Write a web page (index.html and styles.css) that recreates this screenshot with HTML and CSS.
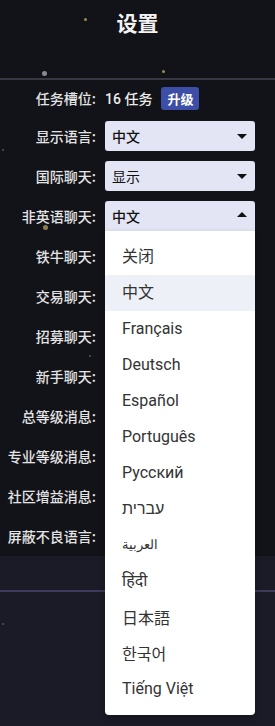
FILE: index.html
```html
<!DOCTYPE html>
<html lang="zh">
  <head>
    <meta charset="UTF-8" />
    <meta name="viewport" content="width=device-width, initial-scale=1.0" />
    <title>设置</title>
    <link rel="stylesheet" href="styles.css">
  </head>
  <body>
    <div class="page">
      <!-- decorative stars -->
      <span class="star gold" style="left: 84px; top: 18px"></span>
      <span class="star grey big" style="left: 42px; top: 71px"></span>
      <span class="star gold" style="left: 162px; top: 70px"></span>
      <span class="star gold spark" style="left: 43px; top: 225px"></span>
      <span class="star dim" style="left: 2px; top: 149px"></span>
      <span class="star dim" style="left: 89px; top: 355px"></span>
      <span class="star dim" style="left: 2px; top: 623px"></span>

      <div class="header">
        <h1>设置</h1>
      </div>

      <div class="settings">
        <div class="row first">
          <div class="label">任务槽位:</div>
          <div class="value">
            <span class="slots">16 任务</span>
            <span class="badge">升级</span>
          </div>
        </div>
        <div class="row">
          <div class="label">显示语言:</div>
          <div class="value">
            <div class="select bold">中文<span class="arrow"></span></div>
          </div>
        </div>
        <div class="row">
          <div class="label">国际聊天:</div>
          <div class="value">
            <div class="select">显示<span class="arrow"></span></div>
          </div>
        </div>
        <div class="row">
          <div class="label">非英语聊天:</div>
          <div class="value">
            <div class="select bold open">中文<span class="arrow up"></span></div>
            <ul class="dropdown">
              <li>关闭</li>
              <li class="active">中文</li>
              <li>Français</li>
              <li>Deutsch</li>
              <li>Español</li>
              <li>Português</li>
              <li>Русский</li>
              <li>עברית</li>
              <li class="arabic">العربية</li>
              <li>हिंदी</li>
              <li lang="ja" class="ja">日本語</li>
              <li lang="ko" class="ko">한국어</li>
              <li>Tiếng Việt</li>
            </ul>
          </div>
        </div>
        <div class="row"><div class="label">铁牛聊天:</div></div>
        <div class="row"><div class="label">交易聊天:</div></div>
        <div class="row"><div class="label">招募聊天:</div></div>
        <div class="row"><div class="label">新手聊天:</div></div>
        <div class="row"><div class="label">总等级消息:</div></div>
        <div class="row"><div class="label">专业等级消息:</div></div>
        <div class="row"><div class="label">社区增益消息:</div></div>
        <div class="row"><div class="label">屏蔽不良语言:</div></div>
      </div>

      <div class="spacer"></div>
      <div class="footer"></div>
    </div>
  </body>
</html>
```

FILE: styles.css
```css
body {
  margin: 0;
  background-color: #1b1b27;
  font-family: "Noto Sans CJK SC", "Noto Sans", sans-serif;
  color: #e6e6e6;
}
.page {
  position: relative;
  min-height: 726px;
  overflow: hidden;
}
.star {
  position: absolute;
  width: 3px;
  height: 3px;
  border-radius: 50%;
}
.star.gold {
  background-color: #9c8a52;
}
.star.grey {
  background-color: #8a8a92;
}
.star.big {
  width: 5px;
  height: 5px;
}
.star.spark {
  width: 5px;
  height: 5px;
  background-color: #8e7d4c;
}
.star.dim {
  width: 2px;
  height: 2px;
  background-color: #55555e;
}
.header {
  height: 80px;
  box-sizing: border-box;
  background-color: #121318;
  border-bottom: 2px solid #383844;
}
h1 {
  margin: 0;
  padding-top: 8px;
  text-align: center;
  font-size: 21px;
  line-height: 28px;
  font-weight: 700;
  color: #f2f2f2;
}
.settings {
  background-color: #121318;
}
.row {
  display: flex;
  align-items: center;
  height: 40px;
}
.row.first {
  height: 36px;
}
.label {
  width: 96px;
  flex: none;
  text-align: right;
  font-size: 14px;
  font-weight: 500;
  color: #e4e4e4;
  white-space: nowrap;
}
.value {
  position: relative;
  margin-left: 9px;
  display: flex;
  align-items: center;
}
.slots {
  font-family: "Roboto", "Noto Sans CJK SC", sans-serif;
  font-size: 14px;
  font-weight: 500;
  color: #ececec;
}
.badge {
  margin-left: 9px;
  background-color: #3d4ea6;
  color: white;
  font-size: 13px;
  font-weight: 700;
  line-height: 23px;
  padding: 0 6px;
  border-radius: 3px;
}
.select {
  position: relative;
  width: 150px;
  height: 30px;
  box-sizing: border-box;
  padding-left: 7px;
  background-color: #e3e5f4;
  border-radius: 3px;
  color: #111;
  font-size: 14px;
  line-height: 30px;
}
.select.bold {
  font-weight: 500;
}
.select.open {
  border-radius: 3px 3px 0 0;
}
.arrow {
  position: absolute;
  right: 8px;
  top: 13px;
  width: 0;
  height: 0;
  border-left: 5px solid transparent;
  border-right: 5px solid transparent;
  border-top: 5px solid #111;
}
.arrow.up {
  top: 11px;
  border-top: none;
  border-bottom: 5px solid #111;
}
.dropdown {
  position: absolute;
  left: 0;
  top: 100%;
  z-index: 2;
  width: 150px;
  margin: 0;
  padding: 8px 0;
  list-style: none;
  background-color: white;
  border-radius: 0 0 4px 4px;
  box-shadow: 0 3px 6px rgba(0, 0, 0, 0.25);
}
.dropdown li {
  height: 36px;
  line-height: 36px;
  padding-left: 17px;
  font-family: "Roboto", "Noto Sans", "Noto Sans CJK SC", sans-serif;
  font-size: 16px;
  color: #333;
}
.dropdown li.active {
  background-color: #edf1f7;
}
.dropdown li.arabic {
  font-family: "DejaVu Sans", sans-serif;
  font-size: 13px;
  font-weight: 300;
}
.dropdown li.ja {
  font-family: "Noto Sans CJK JP", sans-serif;
}
.dropdown li.ko {
  font-family: "Noto Sans CJK KR", sans-serif;
}
.spacer {
  height: 34px;
}
.footer {
  border-top: 2px solid #3e3a5c;
  height: 140px;
}
```
